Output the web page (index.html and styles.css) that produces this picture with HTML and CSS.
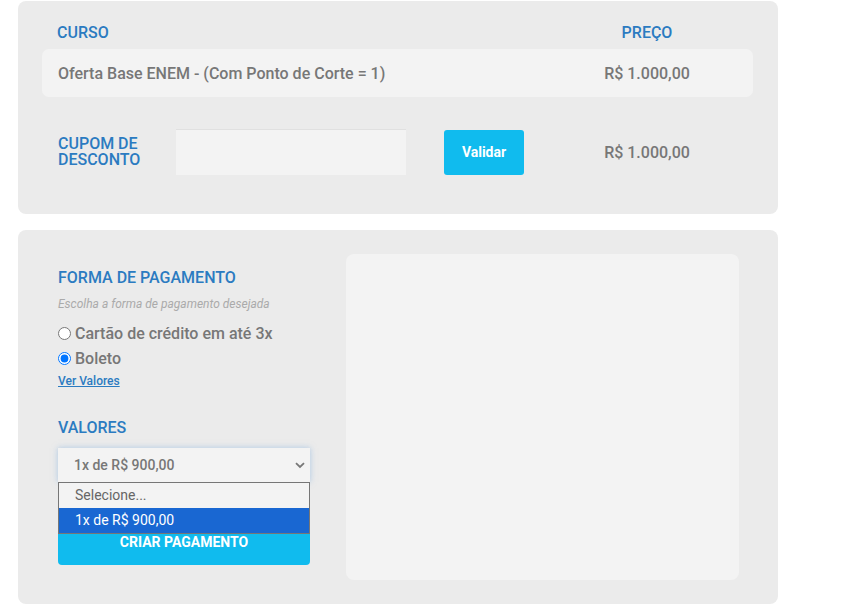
FILE: index.html
```html
<!DOCTYPE html>
<html lang="pt-BR">
<head>
<meta charset="utf-8">
<title>Pagamento</title>
<link rel="stylesheet" href="styles.css">
</head>
<body>
<div class="page">
  <section class="card card-course">
    <div class="table-head">
      <span class="head-course">CURSO</span>
      <span class="head-price">PREÇO</span>
    </div>
    <div class="course-row">
      <span class="course-name">Oferta Base ENEM - (Com Ponto de Corte = 1)</span>
      <span class="course-price">R$ 1.000,00</span>
    </div>
    <div class="coupon-row">
      <label class="coupon-label">CUPOM DE<br>DESCONTO</label>
      <input class="coupon-input" type="text">
      <button class="btn btn-validate" type="button">Validar</button>
      <span class="course-price">R$ 1.000,00</span>
    </div>
  </section>

  <section class="card card-payment">
    <div class="pay-form">
      <h2 class="section-title">FORMA DE PAGAMENTO</h2>
      <p class="hint">Escolha a forma de pagamento desejada</p>
      <label class="radio-line"><input type="radio" name="forma"> Cartão de crédito em até 3x</label>
      <label class="radio-line"><input type="radio" name="forma" checked> Boleto</label>
      <a class="link" href="#">Ver Valores</a>
      <h2 class="section-title values-title">VALORES</h2>
      <div class="select-wrap">
        <div class="select-box">
          <span>1x de R$ 900,00</span>
          <svg class="chevron" width="10" height="7" viewBox="0 0 10 7"><path d="M1 1.2 L5 5 L9 1.2" fill="none" stroke="#777" stroke-width="1.8"/></svg>
        </div>
        <ul class="select-list">
          <li class="opt">Selecione...</li>
          <li class="opt opt-active">1x de R$ 900,00</li>
        </ul>
      </div>
      <button class="btn btn-create" type="button">CRIAR PAGAMENTO</button>
    </div>
    <div class="pay-panel"></div>
  </section>
</div>
</body>
</html>
```

FILE: styles.css
```css
* { box-sizing: border-box; }
html, body { margin: 0; padding: 0; background: #fff; }
body {
  font-family: Roboto, "Liberation Sans", Arial, sans-serif;
  color: #777;
}
.page {
  width: 760px;
  margin-left: 18px;
  padding-top: 1px;
  display: flex;
  flex-direction: column;
  gap: 16px;
}
.card {
  background: #ebebeb;
  border-radius: 8px;
}
.card-course {
  height: 213px;
  padding: 21px 25px 0 24px;
}
.table-head {
  display: flex;
  height: 20px;
  align-items: center;
  font-size: 16px;
  font-weight: 500;
  color: #2b7bc1;
}
.head-course { flex: 1; padding-left: 15px; }
.head-price { width: 212px; text-align: center; }
.course-row {
  margin-top: 7px;
  height: 48px;
  background: #f3f3f3;
  border-radius: 7px;
  display: flex;
  align-items: center;
  padding-left: 16px;
  font-size: 16px;
  font-weight: 500;
  color: #777;
}
.course-name { flex: 1; }
.course-price {
  width: 212px;
  text-align: center;
  font-size: 16px;
  font-weight: 500;
  color: #777;
}
.coupon-row {
  margin-top: 32px;
  height: 46px;
  display: flex;
  align-items: center;
  padding-left: 16px;
}
.coupon-label {
  width: 118px;
  font-size: 16px;
  line-height: 16px;
  font-weight: 500;
  color: #2b7bc1;
}
.coupon-input {
  width: 230px;
  height: 46px;
  border: 0;
  border-top: 1px solid #e0e0e0;
  background: #f3f3f3;
  margin: 0;
  padding: 0 10px;
  outline: none;
}
.btn {
  border: 0;
  background: #10bbee;
  color: #fff;
  font-family: Roboto, "Liberation Sans", Arial, sans-serif;
  font-weight: 700;
  font-size: 14px;
  cursor: pointer;
}
.btn-validate {
  margin-left: 38px;
  width: 80px;
  height: 45px;
  border-radius: 3px;
}
.coupon-row .course-price { margin-left: auto; }

.card-payment {
  height: 374px;
  padding: 24px 39px 24px 40px;
  display: flex;
  gap: 36px;
}
.pay-form {
  width: 252px;
  display: flex;
  flex-direction: column;
  align-items: flex-start;
  padding-top: 14px;
}
.section-title {
  margin: 0;
  font-size: 16px;
  line-height: 20px;
  font-weight: 500;
  color: #2b7bc1;
}
.hint {
  margin: 8px 0 0;
  font-size: 12px;
  line-height: 16px;
  font-style: italic;
  color: #aaa;
}
.radio-line {
  display: flex;
  align-items: center;
  height: 25px;
  font-size: 16px;
  font-weight: 500;
  color: #777;
}
.radio-line:first-of-type { margin-top: 9px; }
.radio-line input {
  margin: 0 4px 0 0;
  width: 13px;
  height: 13px;
}
.link {
  margin-top: 2px;
  font-size: 12px;
  line-height: 16px;
  font-weight: 500;
  color: #2b7bc1;
  text-decoration: underline;
}
.values-title { margin-top: 29px; }
.select-wrap {
  position: relative;
  width: 252px;
  margin-top: 10px;
}
.select-box {
  height: 34px;
  background: #f3f3f3;
  box-shadow: 0 0 6px rgba(120, 170, 220, 0.55);
  display: flex;
  align-items: center;
  justify-content: space-between;
  padding: 0 5px 0 16px;
  font-size: 14px;
  font-weight: 500;
  color: #777;
}
.select-list {
  position: absolute;
  left: 0;
  top: 34px;
  width: 252px;
  margin: 0;
  padding: 0;
  list-style: none;
  border: 1px solid #767676;
  background: #f3f3f3;
  z-index: 2;
}
.opt {
  height: 25px;
  line-height: 25px;
  padding-left: 16px;
  font-size: 14px;
  color: #666;
}
.opt-active {
  background: #1967d2;
  color: #fff;
}
.btn-create {
  margin-top: 37px;
  width: 252px;
  height: 46px;
  border-radius: 4px;
}
.pay-panel {
  flex: 1;
  background: #f3f3f3;
  border-radius: 8px;
}
```
